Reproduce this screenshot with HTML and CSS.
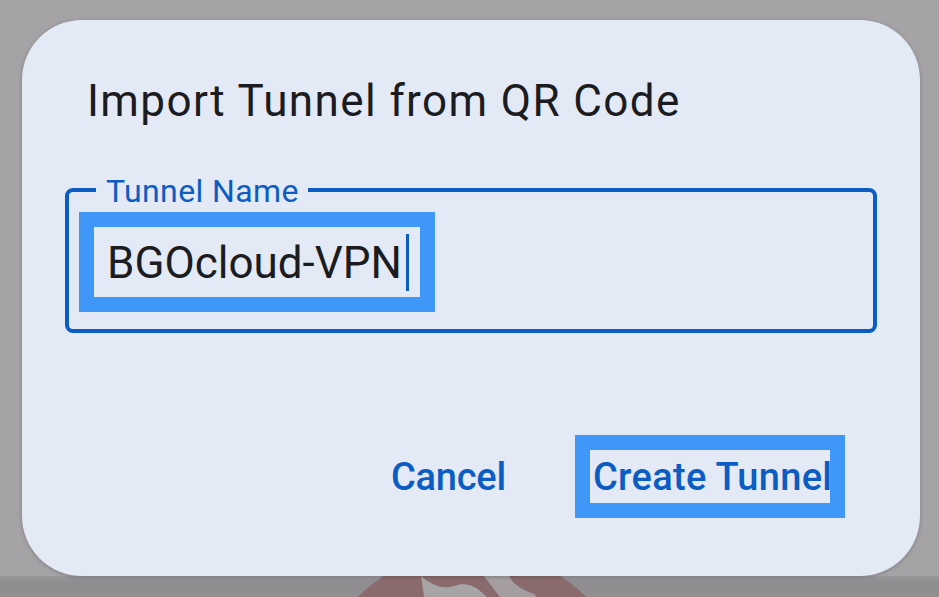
FILE: index.html
```html
<!DOCTYPE html>
<html>
<head>
<meta charset="utf-8">
<link rel="stylesheet" href="styles.css">
</head>
<body>
<div class="backdrop">
  <svg class="globe" width="326" height="326" viewBox="0 0 326 326">
    <circle cx="163" cy="163" r="163" fill="#896b6d"/>
    <path d="M112 26 C122 34 132 40 145 36 C160 30 172 40 180 50 C170 56 160 58 150 52 C140 48 125 56 115 46 Z" fill="#a7a4a6"/>
    <path d="M175 26 L200 26 C205 36 215 40 225 44 C232 50 230 60 222 62 C212 56 200 54 190 46 Z" fill="#a7a4a6" opacity="0.9"/>
  </svg>
</div>
<div class="dialog">
  <h1 class="title">Import Tunnel from QR Code</h1>
  <div class="field">
    <span class="label">Tunnel Name</span>
    <div class="focus">
      <div class="focus-inner"><span class="value">BGOcloud-VPN</span><span class="cursor"></span></div>
    </div>
  </div>
  <div class="actions">
    <span class="btn cancel">Cancel</span>
    <span class="focus-btn"><span class="btn create">Create Tunnel</span></span>
  </div>
</div>
</body>
</html>
```
FILE: styles.css
```css
html, body {
  margin: 0;
  padding: 0;
}
body {
  width: 939px;
  height: 597px;
  overflow: hidden;
  background: #a5a3a5;
  font-family: Roboto, "Noto Sans", sans-serif;
  position: relative;
}
.backdrop {
  position: absolute;
  left: 0;
  top: 576px;
  width: 939px;
  height: 21px;
  overflow: hidden;
  background: linear-gradient(#9a989a 0, #8f8d8f 6px, #918f91 21px);
}
.globe {
  position: absolute;
  left: 309px;
  top: -26px;
}
.dialog {
  position: relative;
  margin: 20px 0 0 22px;
  width: 898px;
  height: 556px;
  box-sizing: border-box;
  background: #e3e9f5;
  border-radius: 60px;
  box-shadow: 0 1px 4px rgba(0,0,0,0.22);
  padding: 55px 43px 0 43px;
}
.title {
  margin: 0 0 0 22px;
  font-weight: 400;
  font-size: 44px;
  line-height: 52px;
  color: #1b1c21;
  letter-spacing: 1.4px;
}
.field {
  position: relative;
  margin-top: 61px;
  height: 145px;
  box-sizing: border-box;
  border: 4px solid #0b5cc3;
  border-radius: 8px;
  padding: 20px 0 0 10px;
}
.label {
  position: absolute;
  left: 27px;
  top: -21px;
  padding: 0 9px 0 10px;
  background: #e3e9f5;
  color: #0b5cc3;
  font-size: 32px;
  line-height: 40px;
  letter-spacing: 0.4px;
}
.focus {
  display: inline-block;
  border: 15px solid #3f98f8;
}
.focus-inner {
  display: flex;
  align-items: center;
  width: 326px;
  height: 70px;
  box-sizing: border-box;
  padding: 0 0 0 13px;
}
.value {
  font-size: 44px;
  line-height: 52px;
  color: #1b1c21;
  letter-spacing: 0;
  margin-top: 2px;
}
.cursor {
  display: inline-block;
  width: 3px;
  height: 57px;
  margin-left: 4px;
  background: #0b5cc3;
}
.actions {
  display: flex;
  justify-content: flex-end;
  align-items: center;
  margin-top: 102px;
  margin-right: 32px;
}
.btn {
  font-weight: 500;
  font-size: 38px;
  line-height: 45px;
  color: #0b5cc3;
  letter-spacing: 0.3px;
}
.cancel {
  margin-right: 69px;
  padding-top: 2px;
  letter-spacing: -0.2px;
}
.focus-btn {
  display: inline-block;
  border: 15px solid #3f98f8;
}
.create {
  display: block;
  width: 240px;
  height: 53px;
  box-sizing: border-box;
  padding: 5px 0 0 3px;
  white-space: nowrap;
}
```
